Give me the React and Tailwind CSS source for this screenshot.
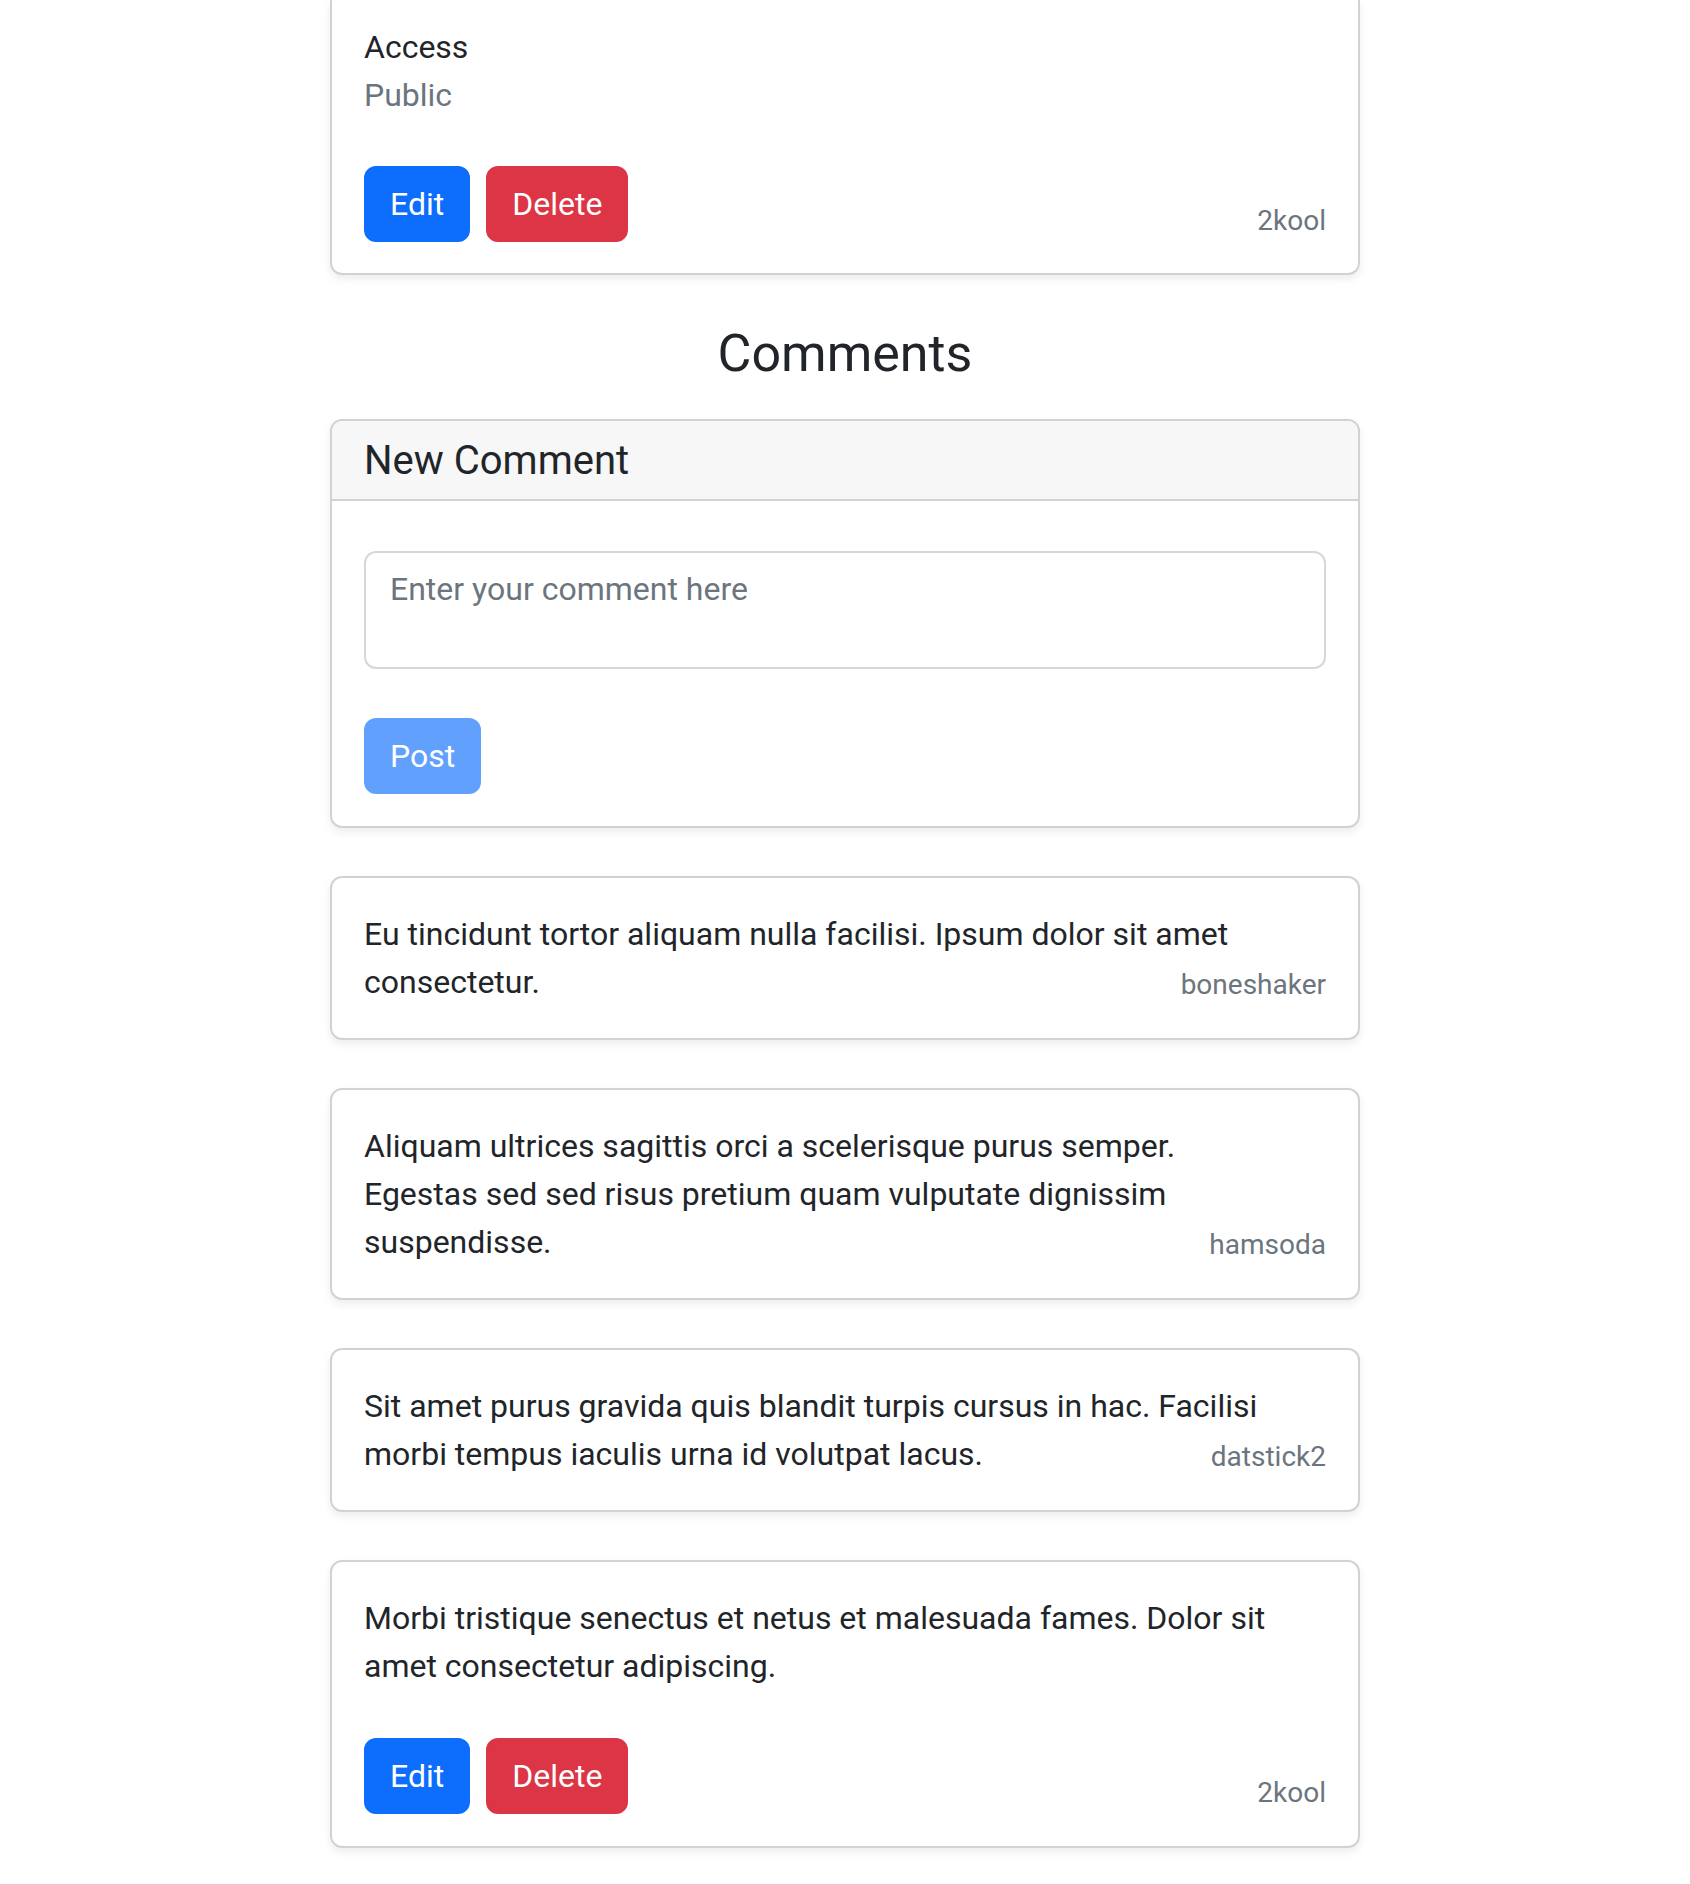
import React from 'react';

const comments = [
    { id: 1, text: 'Eu tincidunt tortor aliquam nulla facilisi. Ipsum dolor sit amet consectetur.', author: 'boneshaker' },
    { id: 2, text: 'Aliquam ultrices sagittis orci a scelerisque purus semper. Egestas sed sed risus pretium quam vulputate dignissim suspendisse.', author: 'hamsoda' },
    { id: 3, text: 'Sit amet purus gravida quis blandit turpis cursus in hac. Facilisi morbi tempus iaculis urna id volutpat lacus.', author: 'datstick2' },
    { id: 4, text: 'Morbi tristique senectus et netus et malesuada fames. Dolor sit amet consectetur adipiscing.', author: '2kool', mine: true },
];

function Actions({ author }) {
    return (
        <div className="flex items-end justify-between">
            <div className="flex gap-4">
                <button className="bg-[#0d6efd] text-white rounded-xl border-2 border-[#0d6efd] px-6 py-3 text-[32px] leading-[48px]">Edit</button>
                <button className="bg-[#dc3545] text-white rounded-xl border-2 border-[#dc3545] px-6 py-3 text-[32px] leading-[48px]">Delete</button>
            </div>
            <span className="text-[#6c757d] text-[28px] leading-[42px]">{author}</span>
        </div>
    );
}

export default function App() {
    return (
        <div className="min-h-screen bg-white text-[#212529] font-['Roboto',sans-serif] pb-[38px]">
            <div className="w-[1030px] mx-auto">
                {/* post card, scrolled past its top */}
                <div className="border-2 border-t-0 border-[#d2d2d2] rounded-b-xl rounded-t-none shadow-[0_4px_8px_rgba(0,0,0,0.075)] px-8 pt-[23px] pb-[31px]">
                    <p className="text-[32px] leading-[48px]">Access</p>
                    <p className="text-[32px] leading-[48px] text-[#6c757d]">Public</p>
                    <div className="mt-[47px]">
                        <Actions author="2kool" />
                    </div>
                </div>

                <h2 className="text-center text-[52px] leading-[62px] mt-[48px] mb-[34px]">Comments</h2>

                <div className="border-2 border-[#d2d2d2] rounded-xl shadow-[0_4px_8px_rgba(0,0,0,0.075)] overflow-hidden">
                    <div className="bg-[#f7f7f7] border-b-2 border-[#d2d2d2] px-8 pt-[16px] pb-[14px]">
                        <h5 className="text-[40px] leading-[48px]">New Comment</h5>
                    </div>
                    <div className="px-8 pt-[50px] pb-[32px]">
                        <textarea
                            placeholder="Enter your comment here"
                            className="block w-full h-[118px] border-2 border-[#d4d8dd] rounded-xl px-[24px] py-[12px] text-[32px] leading-[48px] placeholder-[#6c757d] resize-none outline-none"
                        />
                        <button disabled className="mt-[49px] bg-[#0d6efd] opacity-65 text-white rounded-xl border-2 border-[#0d6efd] px-6 py-3 text-[32px] leading-[48px]">Post</button>
                    </div>
                </div>

                <div className="flex flex-col gap-[48px] mt-[48px]">
                    {comments.map((c) => (
                        <div key={c.id} className="border-2 border-[#d2d2d2] rounded-xl shadow-[0_4px_8px_rgba(0,0,0,0.075)] px-8 py-8">
                            <p className="text-[32px] leading-[48px] pr-12">{c.text}</p>
                            {c.mine ? (
                                <div className="mt-[48px]">
                                    <Actions author={c.author} />
                                </div>
                            ) : (
                                <div className="flex justify-end -mt-[42px]">
                                    <span className="text-[#6c757d] text-[28px] leading-[42px]">{c.author}</span>
                                </div>
                            )}
                        </div>
                    ))}
                </div>
            </div>
        </div>
    );
}
